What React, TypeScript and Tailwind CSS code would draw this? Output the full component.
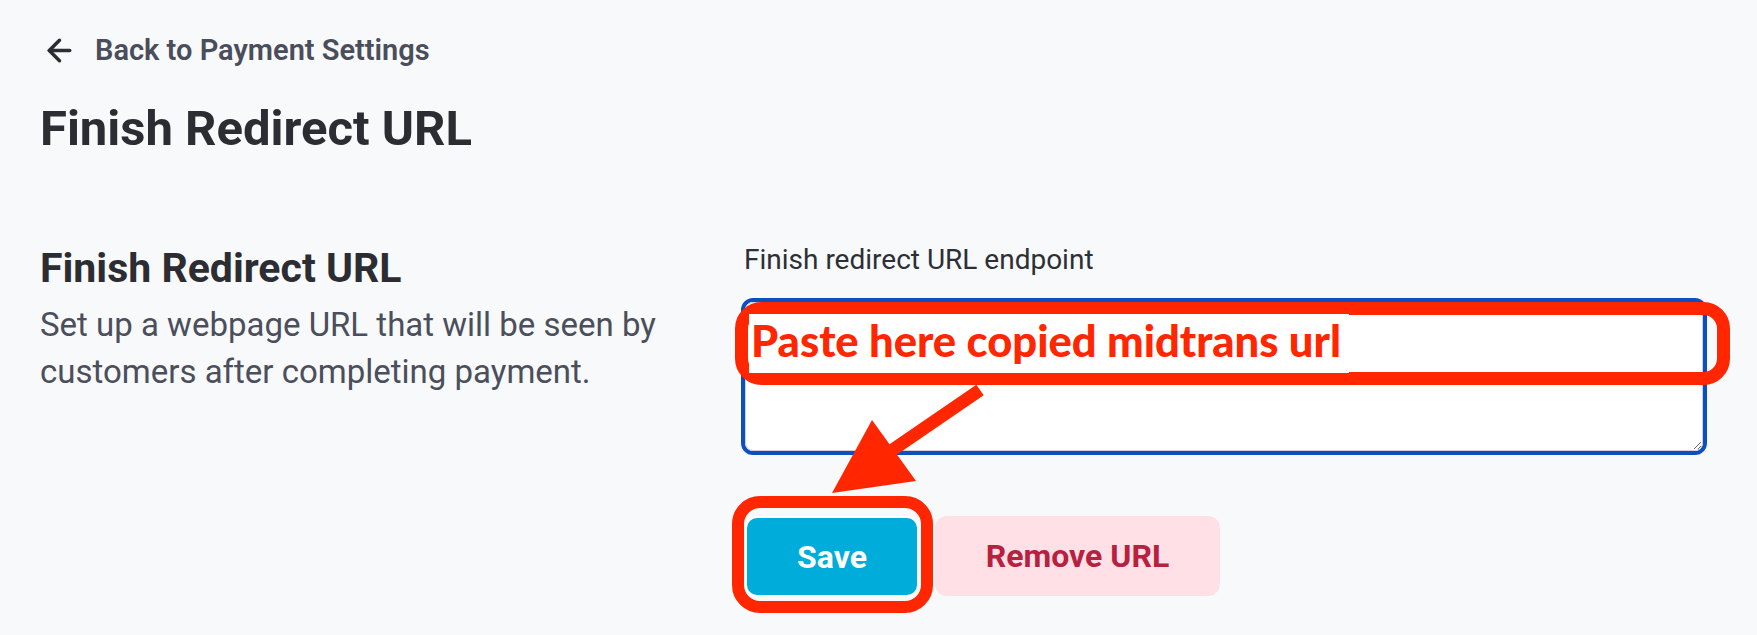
import { ArrowLeft } from 'lucide-react'

// Red markup drawn over the page (annotation layer)
function Annotations() {
    return (
        <svg className="absolute inset-0 pointer-events-none" width="1757" height="635" viewBox="0 0 1757 635">
            <rect x="741.5" y="308.5" width="982" height="70" rx="20" fill="none" stroke="#ff2600" strokeWidth="13" />
            <line x1="980" y1="390" x2="888" y2="453" stroke="#ff2600" strokeWidth="13" />
            <polygon points="872,420 916,481 832,493" fill="#ff2600" />
            <rect x="738" y="502" width="189" height="105" rx="22" fill="none" stroke="#ff2600" strokeWidth="12" />
        </svg>
    )
}

export default function App() {
    return (
        <div className="relative w-[1757px] h-[635px] overflow-hidden bg-[#f8f9fb] font-['Roboto',sans-serif]">
            <div className="pl-[40px] pr-[50px]">
                {/* back link */}
                <a className="flex items-center gap-[18px] pt-[34px] h-[66px] text-[#4a4d5a]">
                    <ArrowLeft size={35} strokeWidth={2.4} className="text-[#2b2d33] ml-[2px]" />
                    <span className="text-[29px] leading-[32px] font-semibold">Back to Payment Settings</span>
                </a>

                <h1 className="mt-[33px] text-[49px] leading-[60px] font-bold text-[#2b2d33]">Finish Redirect URL</h1>

                <div className="mt-[81px] flex">
                    <div className="flex-1 pt-[4px]">
                        <h2 className="text-[41px] leading-[48px] font-bold text-[#2b2d33]">Finish Redirect URL</h2>
                        <p className="mt-[9px] text-[33px] leading-[47px] text-[#4b4f5b]">
                            Set up a webpage URL that will be seen by
                            <br />
                            customers after completing payment.
                        </p>
                    </div>

                    <div className="w-[966px]">
                        <label className="block text-[28px] leading-[40px] text-[#2d2f36] pl-[3px]">Finish redirect URL endpoint</label>
                        <div className="mt-[18px] h-[157px] rounded-[12px] border-[4px] border-[#0b4fc0] bg-white">
                            <textarea className="block w-full h-full rounded-[8px] border border-[#cdd0d6] bg-white outline-none" />
                        </div>
                        <div className="mt-[61px] flex gap-[16px] pl-[4px]">
                            <button className="h-[81px] w-[174px] rounded-[12px] border-2 border-white bg-[#00acd9] text-[32px] font-bold text-white">
                                Save
                            </button>
                            <button className="h-[80px] w-[285px] rounded-[12px] bg-[#ffe0e6] text-[32px] font-bold text-[#b8203f]">
                                Remove URL
                            </button>
                        </div>
                    </div>
                </div>
            </div>

            <Annotations />
            <div className="absolute left-[749px] top-[314px] h-[59px] bg-white pl-[2px] pr-[8px] font-['Lato',sans-serif] text-[43.5px] leading-[52px] font-black text-[#ff2600]">
                Paste here copied midtrans url
            </div>
        </div>
    )
}
